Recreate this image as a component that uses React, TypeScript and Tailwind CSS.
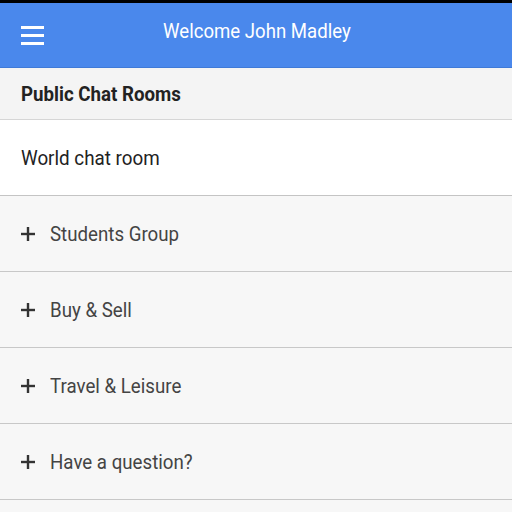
import React from "react";

const items = ["Students Group", "Buy & Sell", "Travel & Leisure", "Have a question?"];

function Plus() {
  return (
    <svg width="14" height="14" viewBox="0 0 14 14" className="shrink-0">
      <rect x="0" y="5.8" width="14" height="2.4" fill="#333" />
      <rect x="5.8" y="0" width="2.4" height="14" fill="#333" />
    </svg>
  );
}

export default function App() {
  return (
    <div className="w-[512px] h-[512px] overflow-hidden bg-[#f7f7f7]" style={{ fontFamily: "Roboto, sans-serif" }}>
      <div className="h-[3px] bg-black" />
      <div className="h-[65px] bg-[#4a88ec] border-b border-[#3f7ad8] flex items-center relative">
        <div className="pl-[21px] flex flex-col gap-[5px]">
          <div className="w-[23px] h-[3px] bg-white" />
          <div className="w-[23px] h-[3px] bg-white" />
          <div className="w-[23px] h-[3px] bg-white" />
        </div>
        <div className="absolute left-0 right-0 top-0 bottom-[8px] flex items-center justify-center text-white text-[20px] pointer-events-none">
          <span className="ml-[2px] scale-x-[0.93] origin-center">Welcome John Madley</span>
        </div>
      </div>
      <div className="h-[52px] bg-[#f4f4f4] border-b border-[#d6d6d6] flex items-center pl-[21px] text-[20px] font-bold text-[#222]">
        <span className="scale-x-[0.935] origin-left">Public Chat Rooms</span>
      </div>
      <div className="h-[76px] bg-white border-b border-[#c4c4c4] flex items-center pl-[21px] text-[20px] text-[#222]">
        <span className="scale-x-[0.94] origin-left">World chat room</span>
      </div>
      {items.map((t) => (
        <div key={t} className="h-[76px] bg-[#f7f7f7] border-b border-[#c8c8c8] flex items-center pl-[21px] text-[20px] text-[#444]">
          <Plus />
          <span className="ml-[15px] scale-x-[0.935] origin-left">{t}</span>
        </div>
      ))}
    </div>
  );
}
